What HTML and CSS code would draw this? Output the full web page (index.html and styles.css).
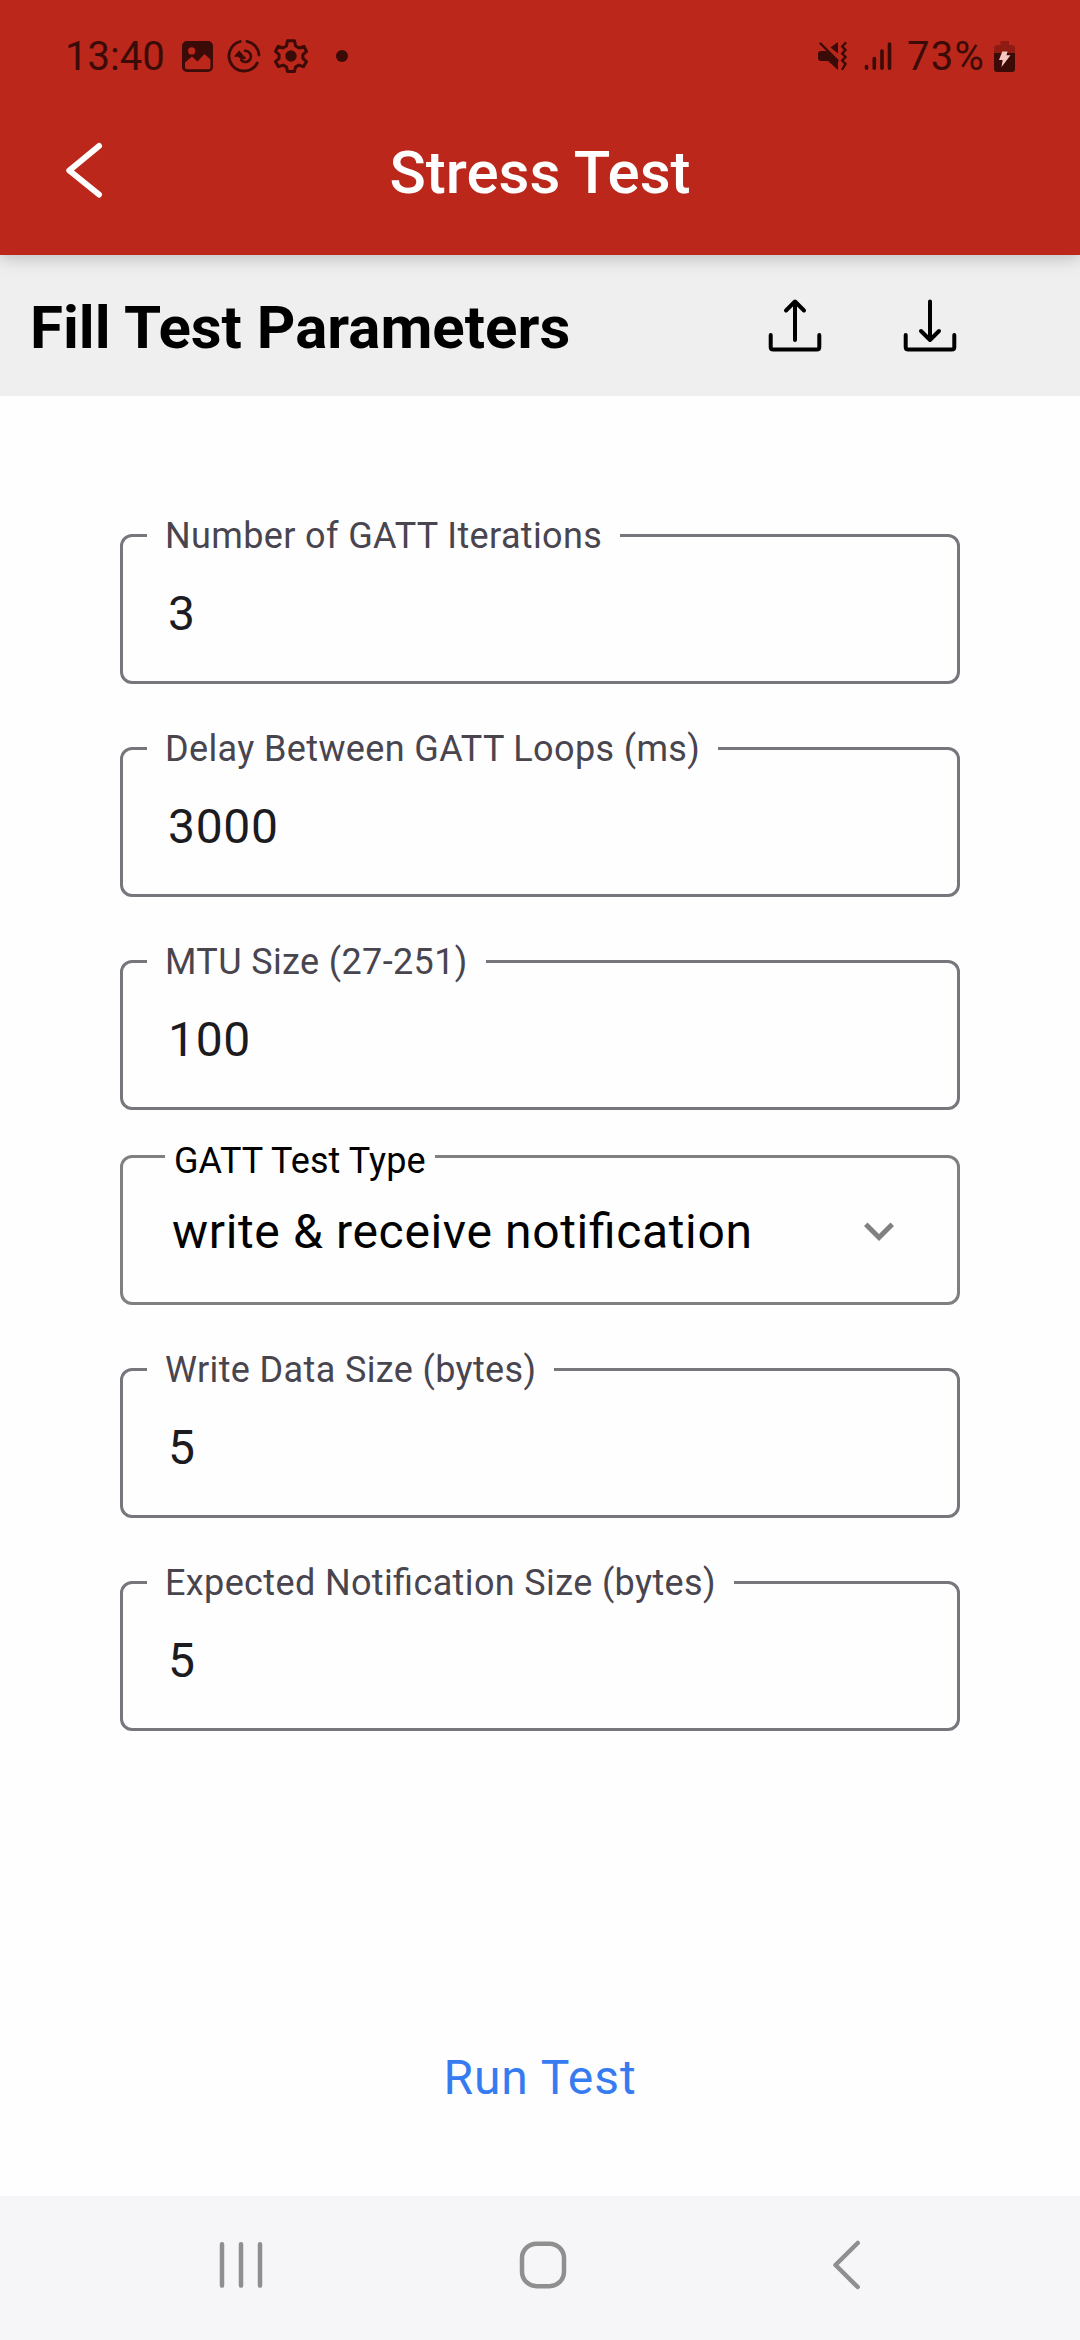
FILE: index.html
```
<!DOCTYPE html>
<html lang="en">
<head>
<meta charset="utf-8">
<title>Stress Test</title>
<link rel="stylesheet" href="styles.css">
</head>
<body>
<div class="screen">
  <header class="app-header">
    <div class="status-bar">
      <div class="status-left">
        <span class="clock">13:40</span>
        <svg class="icon-picture" viewBox="0 0 31 31" width="31" height="31">
          <path fill="#3a0b07" fill-rule="evenodd" d="M5 0H26A5 5 0 0 1 31 5V26A5 5 0 0 1 26 31H5A5 5 0 0 1 0 26V5A5 5 0 0 1 5 0ZM9.7 6.3a3.6 3.6 0 1 0 0 7.2a3.6 3.6 0 1 0 0-7.2ZM3 21.500V26.300A2 2 0 0 0 5 28.300H26.500A2 2 0 0 0 28.500 26.300V18.500L22.500 13L15.500 20.500L10 15.500Z"/>
        </svg>
        <svg class="icon-swirl" viewBox="0 0 34 34" width="34" height="34" fill="none" stroke="#3a0b07" stroke-width="2.800" stroke-linecap="round">
          <path d="M13.200 2.500A15 15 0 1 0 30.300 24M20 2.300A15 15 0 0 1 32 16"/>
          <path stroke-width="2.600" d="M18 11.800A5.600 5.600 0 1 1 14.200 21.200M12.500 16.500Q13 19.300 17.500 18.800"/>
          <path fill="#3a0b07" stroke-width="1.200" stroke-linejoin="round" d="M8 17.200L12.200 12.500L16.200 17.200Z"/>
        </svg>
        <svg class="icon-gear" viewBox="0 0 34 34" width="34" height="34">
          <path fill="none" stroke="#3a0b07" stroke-width="3" stroke-linejoin="round" d="M13.500 1.800h7l1.100 5.200l3.400 2l5-1.700l2.500 5.200l-3.600 3.200v3.600l3.600 3.200l-3 5.200l-4.700-1.600l-3.300 1.900l-1 4.500h-7l-1-4.500l-3.300-1.900l-4.700 1.600l-3-5.200l3.600-3.200v-3.600l-3.600-3.200l2.700-5.200l4.800 1.700l3.400-2z"/>
          <circle cx="17" cy="17" r="5.700" fill="#3a0b07"/>
        </svg>
        <span class="dot"></span>
      </div>
      <div class="status-right">
        <svg viewBox="0 0 30 30" width="30" height="30">
          <path fill="#3a0b07" d="M4 10H9.500L21 20.500V29L11 20H4A3 3 0 0 1 1 17V13A3 3 0 0 1 4 10ZM21 1V12.500L13.500 6.500Z"/>
          <path fill="none" stroke="#3a0b07" stroke-width="2.400" stroke-linecap="round" d="M3.500 2.500L20.500 19.500M28.500 2L25.200 5.500L28.500 9L25.200 12.500L28.500 16L25.200 19.500L28.500 23L25.500 28"/>
        </svg>
        <svg class="icon-signal" viewBox="0 0 28 30" width="28" height="30" stroke="#3a0b07" stroke-width="3.600" stroke-linecap="round">
          <path d="M2.500 25.500V27.300M10.300 17.500V27.300M18 10V27.300M25.500 3V27.300"/>
        </svg>
        <span class="percent">73%</span>
        <svg class="icon-battery" viewBox="0 0 21 31" width="21" height="31">
          <path fill="#8f1c13" d="M6.500 0H15V4H18A3 3 0 0 1 21 7V12H0V7A3 3 0 0 1 3 4H6.500Z"/>
          <path fill="#3a0b07" d="M0 12H21V28A3 3 0 0 1 18 31H3A3 3 0 0 1 0 28Z"/>
          <path fill="#f7c6c1" d="M8.300 10.500H13.500L12.500 14.300H16.500L7.500 26L8.700 19H5Z"/>
        </svg>
      </div>
    </div>
    <div class="title-bar">
      <svg class="back" viewBox="0 0 42 60" width="42" height="60"><path d="M36 6L6.300 30.500L36 54.500" fill="none" stroke="#fff" stroke-width="6" stroke-linecap="round" stroke-linejoin="round"/></svg>
      <h1 class="title">Stress Test</h1>
    </div>
  </header>

  <div class="section-bar">
    <h2 class="section-title">Fill Test Parameters</h2>
    <div class="actions">
      <svg viewBox="0 0 54 54" width="54" height="54" class="action-icon"><path d="M27 42V3.500M18 12.500L27 3.500L36 12.500M2.700 37V49Q2.700 51.500 5.200 51.500H48.800Q51.300 51.500 51.300 49V37"/></svg>
      <svg viewBox="0 0 54 54" width="54" height="54" class="action-icon"><path d="M27 3.500V42M18 33L27 42L36 33M2.700 37V49Q2.700 51.500 5.200 51.500H48.800Q51.300 51.500 51.300 49V37"/></svg>
    </div>
  </div>

  <main class="form">
    <fieldset class="field"><legend>Number of GATT Iterations</legend><div class="value">3</div></fieldset>
    <fieldset class="field"><legend>Delay Between GATT Loops (ms)</legend><div class="value">3000</div></fieldset>
    <fieldset class="field"><legend>MTU Size (27-251)</legend><div class="value">100</div></fieldset>
    <fieldset class="field select"><legend>GATT Test Type</legend>
      <div class="value"><span>write &amp; receive notification</span>
        <svg class="chevron" viewBox="0 0 24 24" width="60" height="60"><path fill="#808080" d="M7.410 8.590L12 13.170l4.590-4.580L18 10l-6 6-6-6z"/></svg>
      </div>
    </fieldset>
    <fieldset class="field"><legend>Write Data Size (bytes)</legend><div class="value">5</div></fieldset>
    <fieldset class="field"><legend>Expected Notification Size (bytes)</legend><div class="value">5</div></fieldset>
  </main>

  <div class="run"><span class="run-button">Run Test</span></div>

  <nav class="nav-bar">
    <svg viewBox="0 0 44 50" width="44" height="50" class="nav-icon"><path d="M3 4.200V45.600M22 4.200V45.600M41 4.200V45.600"/></svg>
    <svg viewBox="0 0 50 50" width="50" height="50" class="nav-icon home"><rect x="4" y="3.700" width="42" height="42.500" rx="14.500"/></svg>
    <svg viewBox="0 0 32 50" width="32" height="50" class="nav-icon"><path d="M25.700 3L3.500 25L25.700 47"/></svg>
  </nav>
</div>
</body>
</html>
```
FILE: styles.css
```
* { box-sizing: border-box; }
body { margin: 0; font-family: Roboto, "Liberation Sans", sans-serif; }
svg { display: block; flex: none; }

.screen {
  width: 1080px;
  height: 2340px;
  display: flex;
  flex-direction: column;
  background: #fefefe;
}

.app-header {
  height: 255px;
  background: #bb271a;
  box-shadow: 0 3px 16px rgba(0, 0, 0, 0.22);
  z-index: 1;
}
.status-bar {
  height: 112px;
  display: flex;
  justify-content: space-between;
  padding: 0 65px 0 65px;
  color: #3a0b07;
}
.status-left, .status-right { display: flex; align-items: center; }
.clock, .percent {
  padding-top: 1px;
  font-size: 40px;
  line-height: 48px;
  font-weight: 400;
}
.clock { width: 117px; }
.icon-swirl { margin-left: 14px; }
.icon-gear { margin-left: 13px; }
.dot { width: 12px; height: 12px; margin-left: 28px; border-radius: 50%; background: #3a0b07; }
.icon-signal { margin-left: 17px; }
.percent { margin-left: 15px; width: 87px; letter-spacing: 1.3px; }

.title-bar {
  height: 143px;
  display: grid;
  grid-template-columns: 63px 1fr 63px;
  padding-top: 28px;
}
.back { justify-self: end; margin-right: -42px; }
.title {
  margin: -2px 0 0;
  text-align: center;
  font-size: 60px;
  line-height: 70px;
  font-weight: 500;
  color: #fff;
}

.section-bar {
  height: 141px;
  display: flex;
  align-items: center;
  justify-content: space-between;
  padding: 4px 123px 0 30px;
  background: #efefef;
}
.section-title { margin: 1px 0 0; font-size: 60px; line-height: 70px; font-weight: 700; color: #000; }
.actions { display: flex; gap: 81px; margin-bottom: 5px; }
.action-icon { fill: none; stroke: #000; stroke-width: 4; stroke-linecap: round; stroke-linejoin: round; }

.form {
  display: flex;
  flex-direction: column;
  gap: 44px;
  padding: 119px 120px 0;
}
.field {
  min-width: 0;
  height: 169px;
  margin: 0;
  padding: 0 0 0 45px;
  border: 3px solid #78767d;
  border-radius: 12px;
}
.field legend {
  margin-left: -21px;
  padding: 2px 18px 0;
  font-size: 36px;
  line-height: 39px;
  letter-spacing: 0.37px;
  font-feature-settings: "liga" 1;
  color: #49454f;
}
.field .value {
  height: 76px;
  padding-top: 30px;
  font-size: 48px;
  line-height: 56px;
  letter-spacing: 0.65px;
  font-feature-settings: "liga" 1;
  color: #1c1b1f;
}
.select {
  height: 173px;
  margin-top: -22px;
  border-color: #808080;
}
.select legend { margin-left: -3px; padding: 10px 9px 0; letter-spacing: 0.08px; color: #000; }
.select .value {
  display: flex;
  align-items: flex-start;
  justify-content: space-between;
  padding: 23px 48px 0 4px;
  color: #000;
}
.chevron { margin-top: -3px; }

.run { flex: 1; display: flex; align-items: center; justify-content: center; padding-top: 229px; }
.run-button { font-size: 48px; line-height: 56px; letter-spacing: 0.9px; color: #367bf0; }

.nav-bar {
  height: 144px;
  display: flex;
  align-items: center;
  justify-content: space-between;
  padding: 0 216px 6px 219px;
  background: #f6f6f8;
}
.nav-icon { fill: none; stroke: #8f8f8f; stroke-width: 4.500; stroke-linecap: round; stroke-linejoin: round; }
.home { margin-right: 9px; }
```
